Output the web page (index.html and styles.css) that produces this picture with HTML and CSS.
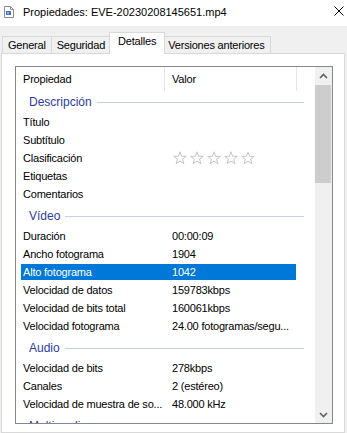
FILE: index.html
```html
<!DOCTYPE html>
<html lang="es">
<head>
<meta charset="utf-8">
<title>Propiedades: EVE-20230208145651.mp4</title>
<link rel="stylesheet" href="styles.css">
</head>
<body>
<div class="window">
  <div class="titlebar">
    <svg class="file-icon" width="10" height="12" viewBox="0 0 10 12">
      <path d="M0.5 0.5h6l3 3v8h-9z" fill="#fff" stroke="#8c8c8c"/>
      <path d="M6.5 0.5v3h3" fill="none" stroke="#8c8c8c"/>
      <rect x="2" y="5" width="5" height="4" fill="#4a6fc8"/>
      <rect x="3" y="6" width="2" height="2" fill="#8fb4ee"/>
    </svg>
    <span class="title">Propiedades: EVE-20230208145651.mp4</span>
    <svg class="close" width="10" height="10" viewBox="0 0 10 10">
      <path d="M0.5 0.5L9.5 9.5M9.5 0.5L0.5 9.5" stroke="#000" stroke-width="1" fill="none"/>
    </svg>
  </div>
  <div class="tabstrip">
    <div class="tab">General</div>
    <div class="tab">Seguridad</div>
    <div class="tab active">Detalles</div>
    <div class="tab">Versiones anteriores</div>
  </div>
  <div class="panel">
    <div class="listbox">
      <div class="list">
        <div class="header">
          <div class="hcell hname">Propiedad</div>
          <div class="hcell hvalue">Valor</div>
          <div class="hcell hrest"></div>
        </div>

        <div class="group first"><span class="glabel">Descripción</span><span class="rule"></span></div>
        <div class="row"><div class="cells"><span class="name">Título</span><span class="value"></span></div></div>
        <div class="row"><div class="cells"><span class="name">Subtítulo</span><span class="value"></span></div></div>
        <div class="row"><div class="cells"><span class="name">Clasificación</span><span class="value stars">
          <svg class="star" width="14" height="14" viewBox="0 0 14 14"><polygon points="7,0.8 8.59,5.22 13.28,5.36 9.57,8.23 10.88,12.74 7,10.1 3.12,12.74 4.43,8.23 0.72,5.36 5.41,5.22"/></svg>
          <svg class="star" width="14" height="14" viewBox="0 0 14 14"><polygon points="7,0.8 8.59,5.22 13.28,5.36 9.57,8.23 10.88,12.74 7,10.1 3.12,12.74 4.43,8.23 0.72,5.36 5.41,5.22"/></svg>
          <svg class="star" width="14" height="14" viewBox="0 0 14 14"><polygon points="7,0.8 8.59,5.22 13.28,5.36 9.57,8.23 10.88,12.74 7,10.1 3.12,12.74 4.43,8.23 0.72,5.36 5.41,5.22"/></svg>
          <svg class="star" width="14" height="14" viewBox="0 0 14 14"><polygon points="7,0.8 8.59,5.22 13.28,5.36 9.57,8.23 10.88,12.74 7,10.1 3.12,12.74 4.43,8.23 0.72,5.36 5.41,5.22"/></svg>
          <svg class="star" width="14" height="14" viewBox="0 0 14 14"><polygon points="7,0.8 8.59,5.22 13.28,5.36 9.57,8.23 10.88,12.74 7,10.1 3.12,12.74 4.43,8.23 0.72,5.36 5.41,5.22"/></svg>
        </span></div></div>
        <div class="row"><div class="cells"><span class="name">Etiquetas</span><span class="value"></span></div></div>
        <div class="row"><div class="cells"><span class="name">Comentarios</span><span class="value"></span></div></div>

        <div class="group"><span class="glabel">Vídeo</span><span class="rule"></span></div>
        <div class="row"><div class="cells"><span class="name">Duración</span><span class="value">00:00:09</span></div></div>
        <div class="row"><div class="cells"><span class="name">Ancho fotograma</span><span class="value">1904</span></div></div>
        <div class="row selected"><div class="cells"><span class="name">Alto fotograma</span><span class="value">1042</span></div></div>
        <div class="row"><div class="cells"><span class="name">Velocidad de datos</span><span class="value">159783kbps</span></div></div>
        <div class="row"><div class="cells"><span class="name">Velocidad de bits total</span><span class="value">160061kbps</span></div></div>
        <div class="row"><div class="cells"><span class="name">Velocidad fotograma</span><span class="value">24.00 fotogramas/segu...</span></div></div>

        <div class="group"><span class="glabel">Audio</span><span class="rule"></span></div>
        <div class="row"><div class="cells"><span class="name">Velocidad de bits</span><span class="value">278kbps</span></div></div>
        <div class="row"><div class="cells"><span class="name">Canales</span><span class="value">2 (estéreo)</span></div></div>
        <div class="row"><div class="cells"><span class="name">Velocidad de muestra de so...</span><span class="value">48.000 kHz</span></div></div>

        <div class="group"><span class="glabel">Multimedia</span><span class="rule"></span></div>
      </div>
      <div class="scrollbar">
        <div class="sb-btn">
          <svg width="9" height="6" viewBox="0 0 9 6"><polyline points="1,5 4.5,1.5 8,5" fill="none" stroke="#606060" stroke-width="1.6"/></svg>
        </div>
        <div class="sb-thumb"></div>
        <div class="sb-track"></div>
        <div class="sb-btn">
          <svg width="9" height="6" viewBox="0 0 9 6"><polyline points="1,1 4.5,4.5 8,1" fill="none" stroke="#606060" stroke-width="1.6"/></svg>
        </div>
      </div>
    </div>
  </div>
</div>
</body>
</html>
```

FILE: styles.css
```css
html, body {
  margin: 0;
  padding: 0;
}

body {
  width: 347px;
  height: 433px;
  overflow: hidden;
  background: #f0f0f0;
  font-family: "Liberation Sans", Arial, sans-serif;
  color: #000;
}

.window {
  display: flex;
  flex-direction: column;
  height: 433px;
}

/* Title bar */
.titlebar {
  height: 26px;
  box-sizing: border-box;
  padding-bottom: 2px;
  background: #fff;
  display: flex;
  align-items: center;
}

.file-icon {
  margin-left: 4px;
  flex: none;
}

.title {
  margin-left: 9px;
  font-size: 11px;
  white-space: nowrap;
}

.close {
  margin-left: auto;
  margin-right: 3px;
  margin-bottom: 2px;
  flex: none;
}

/* Tabs */
.tabstrip {
  height: 27px;
  box-sizing: border-box;
  padding-left: 2px;
  display: flex;
  align-items: flex-end;
}

.tab {
  height: 17px;
  box-sizing: border-box;
  border: 1px solid #d9d9d9;
  border-bottom: none;
  background: #f0f0f0;
  padding: 0 5px;
  margin-left: -1px;
  font-size: 11px;
  letter-spacing: -0.2px;
  line-height: 16px;
  white-space: nowrap;
}

.tab:first-child {
  margin-left: 0;
}

.tab.active {
  height: 22px;
  background: #fff;
  margin: 0 -2px -1px -2px;
  padding: 0 8px;
  line-height: 17px;
  position: relative;
  z-index: 1;
}

/* Panel */
.panel {
  flex: 1;
  margin-left: 1px;
  width: 344px;
  box-sizing: border-box;
  border: 1px solid #d9d9d9;
  background: #fff;
  padding: 12px 0 0 13px;
}

.listbox {
  width: 318px;
  height: 358px;
  box-sizing: border-box;
  border: 1px solid #828790;
  display: flex;
  overflow: hidden;
}

.list {
  flex: 1;
  overflow: hidden;
  font-size: 11px;
  letter-spacing: -0.2px;
}

/* Header */
.header {
  display: flex;
  height: 24px;
}

.hcell {
  box-sizing: border-box;
  border-right: 1px solid #e5e5e5;
  padding-left: 7px;
  line-height: 25px;
  white-space: nowrap;
}

.hname {
  width: 149px;
}

.hvalue {
  width: 132px;
}

.hrest {
  flex: 1;
  border-right: none;
}

/* Groups */
.group {
  display: flex;
  align-items: center;
  height: 22px;
  margin-top: 2px;
  padding-left: 13px;
  padding-right: 11px;
}

.group.first {
  margin-top: 0;
}

.glabel {
  font-size: 12px;
  letter-spacing: 0;
  color: #2b3ca8;
  line-height: 22px;
  white-space: nowrap;
}

.rule {
  flex: 1;
  height: 1px;
  background: #c6d0e0;
  margin-left: 5px;
}

/* Rows */
.row {
  height: 18px;
  box-sizing: border-box;
  padding: 1px 0 1px 5px;
}

.cells {
  display: flex;
  width: 275px;
  height: 16px;
  line-height: 16px;
  white-space: nowrap;
}

.name {
  width: 151px;
  box-sizing: border-box;
  padding-left: 2px;
  overflow: hidden;
  flex: none;
}

.value {
  flex: 1;
  overflow: hidden;
}

.row.selected .cells {
  background: #0078d7;
  color: #fff;
}

.stars {
  display: flex;
  align-items: center;
  gap: 3px;
  padding-left: 1px;
}

.star {
  flex: none;
}

.star polygon {
  fill: #fff;
  stroke: #c4c4c4;
  stroke-width: 1;
  stroke-linejoin: round;
}

/* Scrollbar */
.scrollbar {
  width: 17px;
  flex: none;
  background: #f0f0f0;
  display: flex;
  flex-direction: column;
}

.sb-btn {
  height: 17px;
  display: flex;
  align-items: center;
  justify-content: center;
  flex: none;
}

.sb-thumb {
  height: 98px;
  margin: 1px 1px 0 0;
  background: #cdcdcd;
  flex: none;
}

.sb-track {
  flex: 1;
}
```
